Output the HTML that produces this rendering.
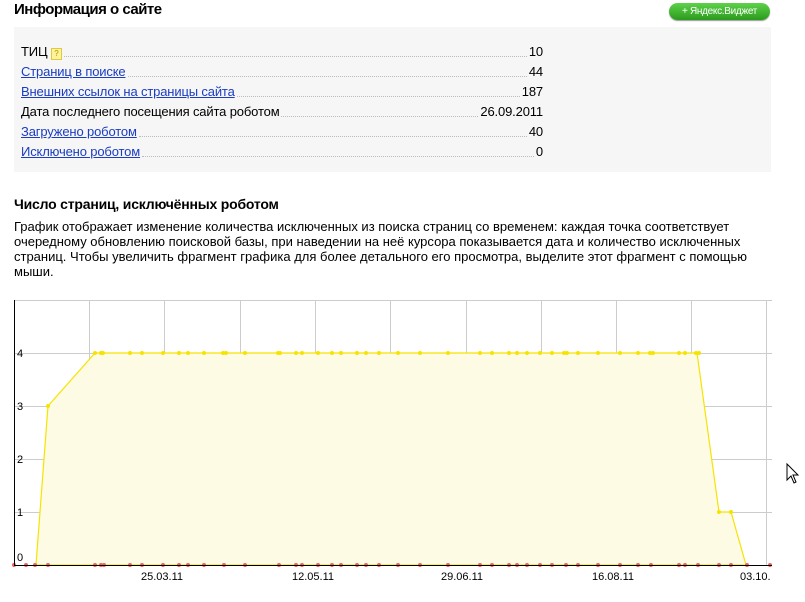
<!DOCTYPE html>
<html><head><meta charset="utf-8"><style>
body{margin:0;width:805px;height:602px;background:#fff;font-family:"Liberation Sans",sans-serif;position:relative;overflow:hidden;color:#000}
h1{position:absolute;left:14px;top:1px;margin:0;font-size:15px;font-weight:bold;letter-spacing:-0.5px}
.btn{position:absolute;left:669px;top:3px;width:101px;height:17px;border-radius:9px;background:linear-gradient(#5ed24a,#2a9a1c);color:#fff;font-size:10px;line-height:17px;text-align:center;box-shadow:0 1px 1px #999;letter-spacing:-0.3px}
.box{position:absolute;left:14px;top:27px;width:757px;height:145px;background:#f6f6f6}
.row{position:absolute;left:21px;width:522px;font-size:13px;height:16px;line-height:16px;display:flex;letter-spacing:-0.15px}
.row .l{white-space:nowrap}.row a{color:#1a3dc1;text-decoration:underline}
.row .d{flex:1;border-bottom:1px dotted #bbb;margin:0 2px 3px}
h2{position:absolute;left:14px;top:196px;margin:0;font-size:14px;font-weight:bold;letter-spacing:-0.2px}
p{position:absolute;left:14px;top:219px;margin:0;font-size:13px;line-height:15px;width:760px}
</style></head><body>
<h1>Информация о сайте</h1>
<div class="btn">+ Яндекс.Виджет</div>
<div class="box"></div>
<div class="row" style="top:44px"><span class="l">ТИЦ <span style="display:inline-block;width:9px;height:10px;background:#fff39a;border:1px solid #e0c840;font-size:8px;line-height:10px;text-align:center;color:#b09000">?</span></span><span class="d"></span><span>10</span></div>
<div class="row" style="top:64px"><a class="l">Страниц в поиске</a><span class="d"></span><span>44</span></div>
<div class="row" style="top:84px"><a class="l">Внешних ссылок на страницы сайта</a><span class="d"></span><span>187</span></div>
<div class="row" style="top:104px"><span class="l">Дата последнего посещения сайта роботом</span><span class="d"></span><span>26.09.2011</span></div>
<div class="row" style="top:124px"><a class="l">Загружено роботом</a><span class="d"></span><span>40</span></div>
<div class="row" style="top:144px"><a class="l">Исключено роботом</a><span class="d"></span><span>0</span></div>
<h2>Число страниц, исключённых роботом</h2>
<p>График отображает изменение количества исключенных из поиска страниц со временем: каждая точка соответствует очередному обновлению поисковой базы, при наведении на неё курсора показывается дата и количество исключенных страниц. Чтобы увеличить фрагмент графика для более детального его просмотра, выделите этот фрагмент с помощью мыши.</p>
<svg style="position:absolute;left:0;top:0" width="805" height="602" font-family="Liberation Sans" font-size="11">
<g stroke="#ccc" stroke-width="1">
<line x1="14" y1="300.5" x2="772" y2="300.5"/><line x1="14" y1="353.5" x2="772" y2="353.5"/><line x1="14" y1="406.5" x2="772" y2="406.5"/><line x1="14" y1="459.5" x2="772" y2="459.5"/><line x1="14" y1="512.5" x2="772" y2="512.5"/>
<line x1="89.5" y1="300" x2="89.5" y2="565"/><line x1="164.5" y1="300" x2="164.5" y2="565"/><line x1="240.5" y1="300" x2="240.5" y2="565"/><line x1="315.5" y1="300" x2="315.5" y2="565"/><line x1="390.5" y1="300" x2="390.5" y2="565"/><line x1="466.5" y1="300" x2="466.5" y2="565"/><line x1="541.5" y1="300" x2="541.5" y2="565"/><line x1="616.5" y1="300" x2="616.5" y2="565"/><line x1="691.5" y1="300" x2="691.5" y2="565"/><line x1="766.5" y1="300" x2="766.5" y2="565"/>
</g>
<polygon points="36,565 48,406 95,353 697,353 719,512 731,512 746,565" fill="#fdfbe4" stroke="#f5e400" stroke-width="1.2"/>
<g fill="#f5e400"><circle cx="48" cy="406" r="2"/><circle cx="719" cy="512" r="2"/><circle cx="731" cy="512" r="2"/></g>
<path d="M95 353 h0 M101 353h0 M103 353h0 M130 353h0 M142 353h0 M163 353h0 M179 353h0 M188 353h0 M204 353h0 M223 353h0 M226 353h0 M245 353h0 M278 353h0 M280 353h0 M296 353h0 M302 353h0 M318 353h0 M332 353h0 M341 353h0 M357 353h0 M366 353h0 M379 353h0 M398 353h0 M420 353h0 M448 353h0 M480 353h0 M492 353h0 M509 353h0 M517 353h0 M527 353h0 M540 353h0 M552 353h0 M564 353h0 M567 353h0 M578 353h0 M598 353h0 M620 353h0 M638 353h0 M650 353h0 M653 353h0 M679 353h0 M685 353h0 M696 353h0 M699 353h0" stroke="#f5e400" stroke-width="4" stroke-linecap="round"/>
<path d="M14 565h0 M26 565h0 M35 565h0 M48 565h0 M95 565h0 M101 565h0 M104 565h0 M130 565h0 M142 565h0 M163 565h0 M179 565h0 M188 565h0 M204 565h0 M224 565h0 M245 565h0 M279 565h0 M296 565h0 M302 565h0 M318 565h0 M332 565h0 M341 565h0 M357 565h0 M366 565h0 M379 565h0 M398 565h0 M420 565h0 M448 565h0 M480 565h0 M492 565h0 M509 565h0 M517 565h0 M527 565h0 M540 565h0 M552 565h0 M566 565h0 M578 565h0 M598 565h0 M620 565h0 M638 565h0 M651 565h0 M679 565h0 M685 565h0 M698 565h0 M719 565h0 M731 565h0 M747 565h0 M770 565h0" stroke="#f06060" stroke-width="4" stroke-linecap="round"/>
<line x1="14.5" y1="300" x2="14.5" y2="566" stroke="#000"/>
<line x1="14" y1="565.5" x2="772" y2="565.5" stroke="#000"/>
<g fill="#000"><text x="17" y="357">4</text><text x="17" y="410">3</text><text x="17" y="463">2</text><text x="17" y="516">1</text><text x="17" y="561">0</text>
<text x="141" y="580">25.03.11</text><text x="292" y="580">12.05.11</text><text x="441" y="580">29.06.11</text><text x="592" y="580">16.08.11</text><text x="740" y="580">03.10.</text></g>
<path d="M787 464 L787 480 L791 476 L794 483 L796 482 L793 475 L798 475 Z" fill="#fff" stroke="#000"/>
</svg>
</body></html>
